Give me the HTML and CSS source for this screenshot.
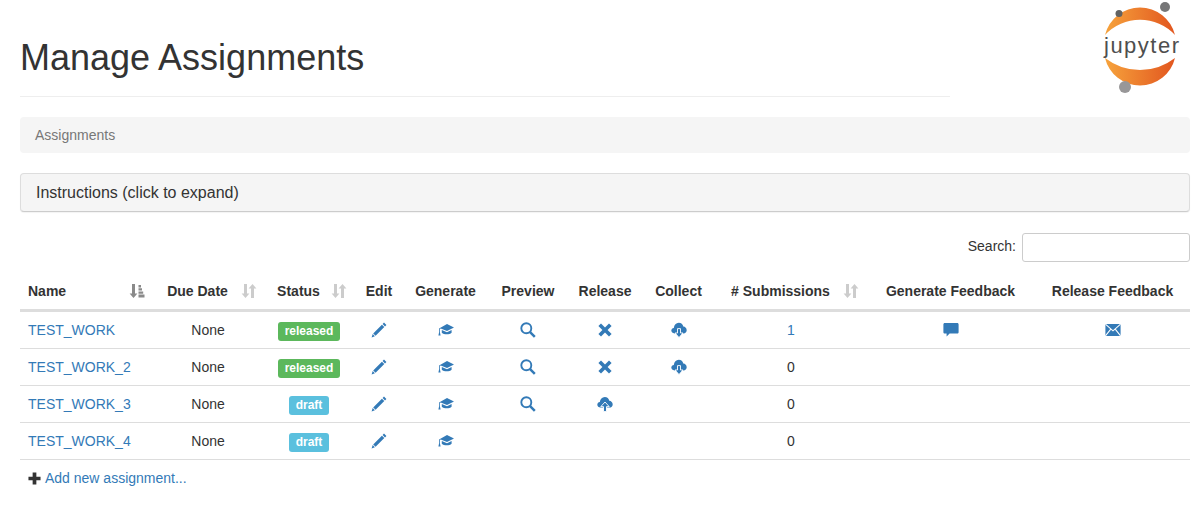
FILE: index.html
```html
<!DOCTYPE html>
<html lang="en">
<head>
    <meta charset="UTF-8">
    <title>Manage Assignments</title>
    <link rel="stylesheet" href="styles.css">
</head>
<body>
    <svg class="defs" width="0" height="0">
        <defs>
            <linearGradient id="logoOrange" x1="0" x2="1" y1="0" y2="0">
                <stop offset="0" stop-color="#f6a33c"/>
                <stop offset="1" stop-color="#e2561f"/>
            </linearGradient>
            <symbol id="i-pencil" viewBox="0 0 16 16">
                <path d="M13 .6 15.4 3 14 4.4 11.6 2Z M10.9 2.7 13.3 5.1 4.6 13.8 2.2 11.4Z M1.7 12.1 3.9 14.3 .6 15.4Z"/>
            </symbol>
            <symbol id="i-education" viewBox="0 0 16 16">
                <path d="M9 2 16 5.600 9 9 2.700 6.400 1.900 6.900V10.200L2.600 13.400H.4L1.100 10.200V6.500Z"/>
                <path d="M3.800 8 9 10.200 13.600 8V10.700C11.500 12.900 6 12.900 3.800 10.700Z"/>
            </symbol>
            <symbol id="i-search" viewBox="0 0 16 16">
                <circle cx="6.300" cy="6.300" r="5" fill="none" stroke="#337ab7" stroke-width="1.900"/>
                <path d="M9.800 9.800 14.800 14.800" fill="none" stroke="#337ab7" stroke-width="2.500"/>
            </symbol>
            <symbol id="i-remove" viewBox="0 0 16 16">
                <path d="M4 1.400 8 5.400 12 1.400 14.600 4 10.600 8 14.600 12 12 14.600 8 10.600 4 14.600 1.400 12 5.400 8 1.400 4Z"/>
            </symbol>
            <symbol id="i-cloud-down" viewBox="0 0 16 16">
                <path d="M3.600 11.400C1.600 11.400 .3 10.200 .3 8.600 .3 7.200 1.400 6 2.800 5.900 3.200 3 5 .8 7.800 .8 10.200 .8 11.800 2.400 12.300 4.600 14.200 4.700 15.700 6.400 15.700 8.200 15.700 10 14.300 11.400 12.400 11.400Z"/>
                <path d="M6.500 6.600H9.500V11H12L8 15.600 4 11H6.500Z" stroke="#fff" stroke-width=".9"/>
            </symbol>
            <symbol id="i-cloud-up" viewBox="0 0 16 16">
                <path d="M3.600 11.600C1.600 11.600 .3 10.400 .3 8.800 .3 7.400 1.400 6.200 2.800 6.100 3.200 3.200 5 1 7.800 1 10.200 1 11.800 2.600 12.300 4.800 14.200 4.900 15.700 6.600 15.700 8.400 15.700 10.200 14.300 11.600 12.400 11.600Z"/>
                <path d="M8 6 12.200 10.600H9.500V15.600H6.500V10.600H3.800Z" stroke="#fff" stroke-width=".9"/>
            </symbol>
            <symbol id="i-comment" viewBox="0 0 16 16">
                <path d="M1.800 1H14.200C15 1 15.600 1.600 15.600 2.400V10.200C15.600 11 15 11.600 14.200 11.600H6.600L3.600 14.600V11.600H1.800C1 11.600 .4 11 .4 10.200V2.400C.4 1.600 1 1 1.800 1Z"/>
            </symbol>
            <symbol id="i-envelope" viewBox="0 0 16 16">
                <path d="M.4 2H15.600V14H.4Z"/>
                <path d="M.4 2.200 8 8.800 15.600 2.200M.4 13.800 5.800 7.200M15.600 13.800 10.200 7.200" fill="none" stroke="#fff" stroke-width="1.100"/>
            </symbol>
            <symbol id="i-plus" viewBox="0 0 14 14">
                <path d="M5 .5H9V5H13.500V9H9V13.500H5V9H.5V5H5Z"/>
            </symbol>
            <symbol id="i-sort" viewBox="0 0 16 16">
                <path d="M3 1H6V10.500H8.400L4.500 15 .6 10.500H3Z"/>
                <path d="M10 15H13V5.500H15.400L11.500 1 7.600 5.500H10Z"/>
            </symbol>
            <symbol id="i-sort-asc" viewBox="0 0 16 16">
                <path d="M3 1H6V10.500H8.400L4.500 15 .6 10.500H3Z"/>
                <path d="M9.500 2H12V4.400H9.500ZM9.500 5.200H13V7.600H9.500ZM9.500 8.400H14.200V10.800H9.500ZM9.500 11.600H15.500V14.400H9.500Z"/>
            </symbol>
        </defs>
    </svg>

    <div class="container">
        <div class="top">
            <div class="page-header">
                <h1>Manage Assignments</h1>
            </div>
            <svg class="logo" viewBox="0 0 90 100" width="90" height="100">
                <path d="M15 35A36 36 0 0 1 85 35 48 48 0 0 0 15 35Z" fill="url(#logoOrange)"/>
                <path d="M15 58A36 36 0 0 0 85 58 57 57 0 0 1 15 58Z" fill="url(#logoOrange)"/>
                <circle cx="75" cy="7" r="5" fill="#767677"/>
                <circle cx="29" cy="13.500" r="3.500" fill="#616262"/>
                <circle cx="35" cy="87" r="6" fill="#989798"/>
                <text class="logo-text" x="14" y="53" textLength="75" lengthAdjust="spacing">jupyter</text>
            </svg>
        </div>

        <ol class="breadcrumb"><li>Assignments</li></ol>

        <div class="panel">Instructions (click to expand)</div>

        <div class="search-row">
            <label for="search">Search:</label>
            <input type="search" id="search">
        </div>

        <table class="assignments">
            <colgroup>
                <col class="c-name"><col class="c-due"><col class="c-status"><col class="c-edit"><col class="c-gen">
                <col class="c-prev"><col class="c-rel"><col class="c-coll"><col class="c-subs"><col class="c-gfb"><col class="c-rfb">
            </colgroup>
            <thead>
                <tr>
                    <th class="left sortable">Name<svg class="sort-icon active"><use href="#i-sort-asc"/></svg></th>
                    <th class="sortable">Due Date<svg class="sort-icon"><use href="#i-sort"/></svg></th>
                    <th class="sortable">Status<svg class="sort-icon"><use href="#i-sort"/></svg></th>
                    <th>Edit</th>
                    <th>Generate</th>
                    <th>Preview</th>
                    <th>Release</th>
                    <th>Collect</th>
                    <th class="sortable"># Submissions<svg class="sort-icon"><use href="#i-sort"/></svg></th>
                    <th>Generate Feedback</th>
                    <th>Release Feedback</th>
                </tr>
            </thead>
            <tbody>
                <tr>
                    <td class="left"><a href="#">TEST_WORK</a></td>
                    <td>None</td>
                    <td><span class="label released">released</span></td>
                    <td><svg class="icon"><use href="#i-pencil"/></svg></td>
                    <td><svg class="icon"><use href="#i-education"/></svg></td>
                    <td><svg class="icon"><use href="#i-search"/></svg></td>
                    <td><svg class="icon"><use href="#i-remove"/></svg></td>
                    <td><svg class="icon"><use href="#i-cloud-down"/></svg></td>
                    <td><a href="#">1</a></td>
                    <td><svg class="icon"><use href="#i-comment"/></svg></td>
                    <td><svg class="icon"><use href="#i-envelope"/></svg></td>
                </tr>
                <tr>
                    <td class="left"><a href="#">TEST_WORK_2</a></td>
                    <td>None</td>
                    <td><span class="label released">released</span></td>
                    <td><svg class="icon"><use href="#i-pencil"/></svg></td>
                    <td><svg class="icon"><use href="#i-education"/></svg></td>
                    <td><svg class="icon"><use href="#i-search"/></svg></td>
                    <td><svg class="icon"><use href="#i-remove"/></svg></td>
                    <td><svg class="icon"><use href="#i-cloud-down"/></svg></td>
                    <td>0</td>
                    <td></td>
                    <td></td>
                </tr>
                <tr>
                    <td class="left"><a href="#">TEST_WORK_3</a></td>
                    <td>None</td>
                    <td><span class="label draft">draft</span></td>
                    <td><svg class="icon"><use href="#i-pencil"/></svg></td>
                    <td><svg class="icon"><use href="#i-education"/></svg></td>
                    <td><svg class="icon"><use href="#i-search"/></svg></td>
                    <td><svg class="icon"><use href="#i-cloud-up"/></svg></td>
                    <td></td>
                    <td>0</td>
                    <td></td>
                    <td></td>
                </tr>
                <tr>
                    <td class="left"><a href="#">TEST_WORK_4</a></td>
                    <td>None</td>
                    <td><span class="label draft">draft</span></td>
                    <td><svg class="icon"><use href="#i-pencil"/></svg></td>
                    <td><svg class="icon"><use href="#i-education"/></svg></td>
                    <td></td>
                    <td></td>
                    <td></td>
                    <td>0</td>
                    <td></td>
                    <td></td>
                </tr>
                <tr>
                    <td class="left add-row" colspan="11">
                        <svg class="plus"><use href="#i-plus"/></svg><a href="#">Add new assignment...</a>
                    </td>
                </tr>
            </tbody>
        </table>
    </div>
</body>
</html>
```

FILE: styles.css
```css
body {
    margin: 0;
    font-family: "Liberation Sans", Arial, sans-serif;
    font-size: 14px;
    line-height: 20px;
    color: #333;
    background: #fff;
}
a {
    color: #337ab7;
    text-decoration: none;
}
.defs {
    display: block;
    height: 0;
}
.container {
    width: 1170px;
    margin-left: 20px;
}
.top {
    display: flex;
    justify-content: space-between;
    height: 97px;
}
.page-header {
    width: 930px;
    height: 97px;
    box-sizing: border-box;
    padding-top: 38px;
    border-bottom: 1px solid #eee;
}
h1 {
    margin: 0;
    font-size: 36px;
    font-weight: 500;
    line-height: 40px;
}
.logo {
    flex: none;
    margin-right: 10px;
}
.logo-text {
    font-family: "Liberation Sans", Arial, sans-serif;
    font-size: 22px;
    fill: #4e4e4e;
}
.breadcrumb {
    list-style: none;
    margin: 20px 0;
    padding: 8px 15px;
    background: #f5f5f5;
    border-radius: 4px;
    color: #777;
}
.panel {
    height: 39px;
    box-sizing: border-box;
    margin-bottom: 21px;
    padding: 9px 15px;
    font-size: 16px;
    background: #f5f5f5;
    border: 1px solid #ddd;
    border-bottom-color: #ccc;
    border-radius: 4px;
    box-shadow: 0 1px 1px rgba(0, 0, 0, 0.05);
}
.search-row {
    display: flex;
    justify-content: flex-end;
    align-items: flex-start;
    gap: 6px;
    height: 30px;
    margin-bottom: 10px;
}
.search-row label {
    padding-top: 3px;
}
.search-row input {
    width: 168px;
    height: 29px;
    box-sizing: border-box;
    padding: 5px 10px;
    border: 1px solid #ccc;
    border-radius: 3px;
}
.assignments {
    width: 100%;
    table-layout: fixed;
    border-collapse: separate;
    border-spacing: 0;
}
.c-name { width: 132px; }
.c-due { width: 112px; }
.c-status { width: 90px; }
.c-edit { width: 50px; }
.c-gen { width: 83px; }
.c-prev { width: 82px; }
.c-rel { width: 72px; }
.c-coll { width: 75px; }
.c-subs { width: 150px; }
.c-gfb { width: 169px; }
.c-rfb { width: 155px; }
th, td {
    text-align: center;
    white-space: nowrap;
}
th {
    position: relative;
    height: 39px;
    box-sizing: border-box;
    padding: 8px;
    font-weight: 700;
    border-bottom: 3px solid #ddd;
}
td {
    height: 37px;
    box-sizing: border-box;
    padding: 5px 8px;
    border-bottom: 1px solid #ddd;
}
th.sortable {
    padding-right: 29px;
}
th.left, td.left {
    text-align: left;
}
.sort-icon {
    position: absolute;
    right: 7px;
    top: 10px;
    width: 16px;
    height: 16px;
    fill: #ccc;
}
.sort-icon.active {
    fill: #8a8a8a;
}
.icon {
    display: inline-block;
    vertical-align: -3px;
    width: 16px;
    height: 16px;
    fill: #337ab7;
}
.label {
    display: inline-block;
    padding: 0 6.5px;
    height: 19px;
    line-height: 19px;
    vertical-align: -1px;
    font-size: 12px;
    font-weight: 700;
    color: #fff;
    border-radius: 3px;
}
.released {
    background: #5cb85c;
}
.draft {
    background: #5bc0de;
}
.add-row {
    padding-bottom: 7px;
    border-bottom: 0;
}
.plus {
    width: 13px;
    height: 13px;
    margin-right: 4px;
    vertical-align: -2px;
    fill: #333;
}
```
